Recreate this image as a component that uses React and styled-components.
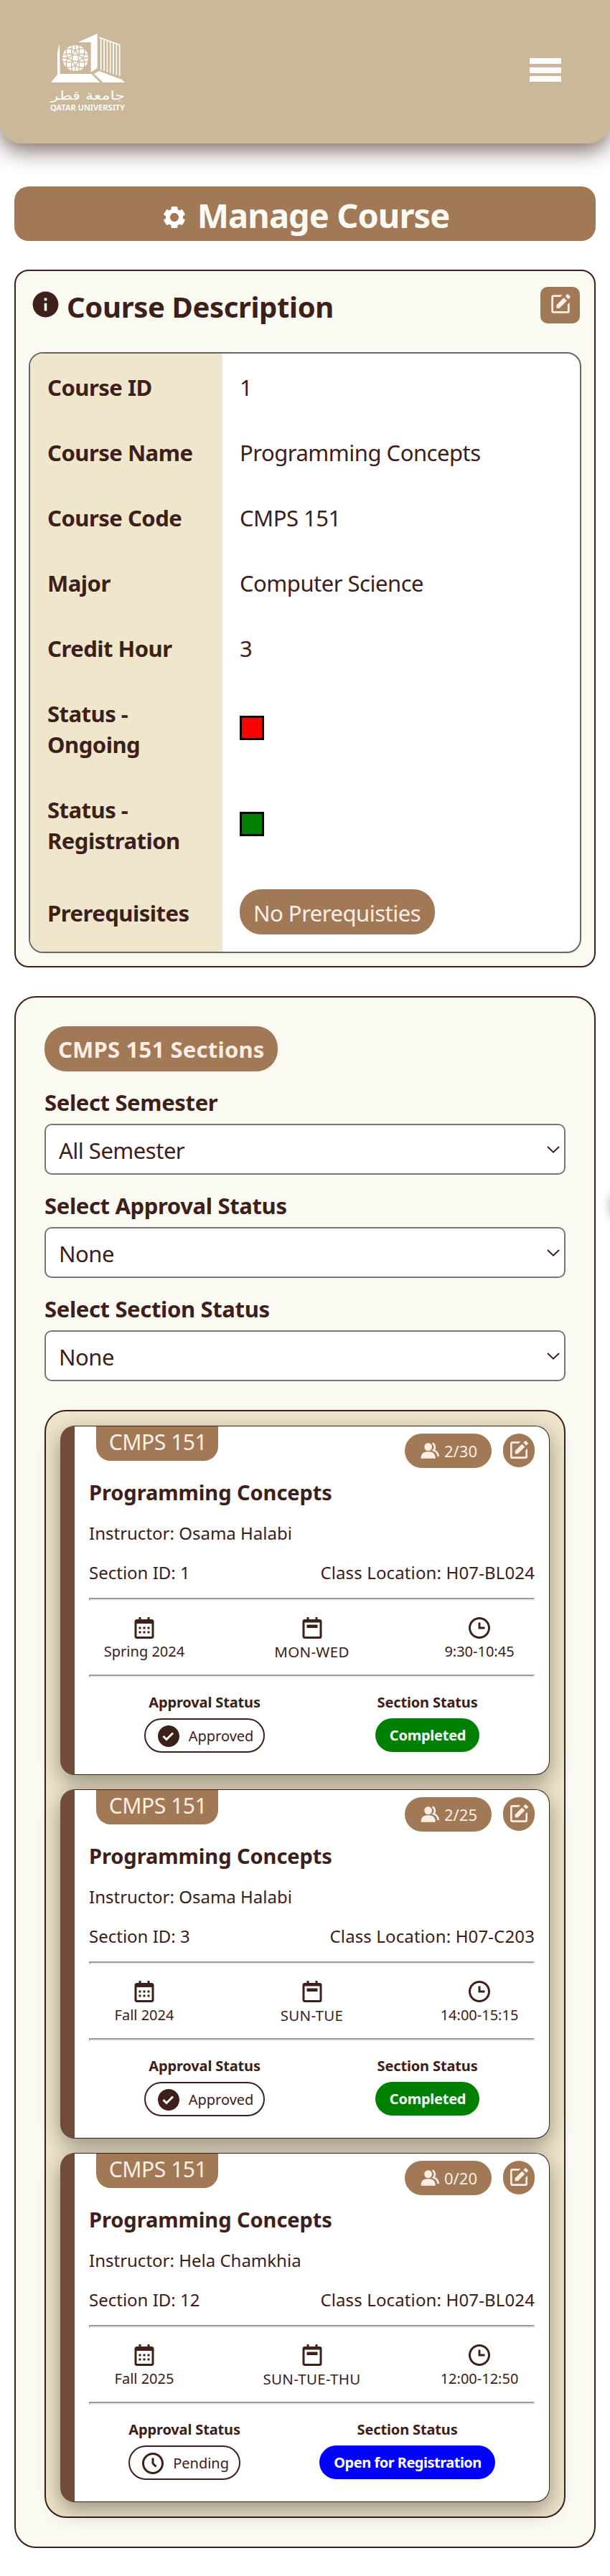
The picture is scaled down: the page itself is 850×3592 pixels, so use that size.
import React from "react";
import styled, { createGlobalStyle } from "styled-components";
import {
  BiSolidCog,
  BiSolidInfoCircle,
  BiCalendar,
  BiTime,
  BiTimeFive,
  BiSolidEdit,
  BiSolidGroup,
  BiSolidCheckCircle,
} from "react-icons/bi";

const ink = "#3c2019";
const brown = "#a17956";
const sand = "#cbb799";
const cream = "#fbfaf2";
const beige = "#efe6cb";
const linen = "#faeee4";

const GlobalStyle = createGlobalStyle`
  * { box-sizing: border-box; }
  body {
    margin: 0;
    background: #fff;
    color: ${ink};
    font-family: "Noto Sans", "Open Sans", sans-serif;
  }
  svg { flex: none; display: block; }
`;

const Page = styled.div`
  position: relative;
  overflow: hidden;
`;

const Header = styled.header`
  display: flex;
  justify-content: space-between;
  align-items: flex-start;
  height: 200px;
  padding: 30px 68px 0 40px;
  background: ${sand};
  border-radius: 0 0 30px 30px;
  box-shadow: 0 10px 30px rgba(60, 32, 25, 0.66);
`;

const MenuButton = styled.div`
  display: flex;
  flex-direction: column;
  gap: 4.5px;
  width: 44px;
  margin-top: 51px;
`;

const MenuBar = styled.span`
  height: 8px;
  background: #fff;
  border-radius: 1px;
`;

const Main = styled.main`
  display: flex;
  flex-direction: column;
  gap: 40px;
  padding: 60px 20px 39px;
`;

const TitleBar = styled.h1`
  display: flex;
  align-items: center;
  justify-content: center;
  gap: 14px;
  height: 76px;
  margin: 0;
  padding: 3px 0 0 1px;
  background: ${brown};
  border-radius: 20px;
  color: ${cream};
  font-size: 47px;
  line-height: 72px;
  letter-spacing: -0.95px;
  svg { color: #fff; margin-top: 7px; }
`;

const Panel = styled.section`
  border: 2px solid ${ink};
  border-radius: ${(p) => (p.$wide ? 30 : 20)}px;
  padding: ${(p) => (p.$wide ? "40px" : "22px 18px 18px")};
  background: ${cream};
`;

const PanelHead = styled.div`
  display: flex;
  align-items: flex-start;
  justify-content: space-between;
  height: 91px;
  padding: 0 2px 0 2px;
`;

const PanelTitle = styled.h2`
  display: flex;
  gap: 8px;
  margin: 0;
  font-size: 40px;
  line-height: 55px;
  letter-spacing: -0.35px;
  svg { margin-top: 3px; }
`;

const SquareEdit = styled.div`
  display: flex;
  align-items: center;
  justify-content: center;
  width: 55px;
  height: 51px;
  padding-bottom: 4px;
  border-radius: 10px;
  background: ${brown};
  color: ${linen};
`;

const Details = styled.div`
  overflow: hidden;
  border: 2px solid #666;
  border-radius: 20px;
  background: #fff;
`;

const DetailRow = styled.div`
  display: grid;
  grid-template-columns: 268px 1fr;
  font-size: 31px;
  line-height: 43px;
  letter-spacing: -0.5px;
`;

const DetailLabel = styled.div`
  display: flex;
  align-items: center;
  padding: 26px 24px 22px;
  background: #f0e6cc;
  font-weight: 700;
`;

const DetailValue = styled.div`
  display: flex;
  align-items: center;
  padding: ${(p) => (p.$text ? "26px 24px 22px" : "24px")};
`;

const Swatch = styled.span`
  width: 34px;
  height: 34px;
  border: 3px solid #000;
  background: ${(p) => p.$color};
`;

const Pill = styled.span`
  display: inline-flex;
  align-items: center;
  height: 63px;
  padding: 3px 20px 0 19px;
  border-radius: 30px;
  background: ${brown};
  color: ${linen};
  font-size: 31px;
  line-height: 43px;
`;

const SectionsPill = styled(Pill)`
  padding: 2px 18px 0 19px;
  font-weight: 700;
  letter-spacing: 0.2px;
`;

const Filters = styled.div`
  display: flex;
  flex-direction: column;
  gap: 21px;
  margin: 21px 0 40px;
`;

const Field = styled.div`
  display: flex;
  flex-direction: column;
  gap: 8px;
`;

const FieldLabel = styled.div`
  font-size: 31px;
  font-weight: 700;
  line-height: 44px;
  letter-spacing: -0.35px;
`;

const SelectBox = styled.div`
  display: flex;
  align-items: center;
  justify-content: space-between;
  height: 71px;
  padding: 0 6px 0 18px;
  border: 2px solid #767676;
  border-radius: 10px;
  background: #fff;
  font-size: 31px;
  line-height: 43px;
  letter-spacing: -0.5px;
  span { padding-top: 3px; }
`;

const CardList = styled.div`
  display: flex;
  flex-direction: column;
  gap: 20px;
  padding: 20px;
  border: 2px solid ${ink};
  border-radius: 30px;
  background: ${beige};
`;

const Card = styled.article`
  height: 487px;
  padding: 0 20px;
  border: 1px solid ${ink};
  border-left: 20px solid #704c39;
  border-radius: 20px;
  background: #fff;
  box-shadow: 0 10px 30px rgba(0, 0, 0, 0.38);
`;

const CardTop = styled.div`
  display: flex;
  align-items: flex-start;
  height: 72px;
  padding-left: 10px;
`;

const CodeTag = styled.div`
  width: 170px;
  height: 48px;
  margin-right: auto;
  padding-left: 2px;
  border-radius: 0 0 20px 20px;
  background: ${brown};
  color: ${linen};
  font-size: 30px;
  line-height: 43px;
  letter-spacing: -0.42px;
  text-align: center;
`;

const SeatCount = styled.div`
  display: flex;
  align-items: center;
  justify-content: center;
  gap: 3px;
  width: 121px;
  height: 48px;
  margin: 10px 16px 0 0;
  border-radius: 24px;
  background: ${brown};
  color: ${linen};
  font-size: 22px;
`;

const RoundEdit = styled.div`
  display: flex;
  align-items: center;
  justify-content: center;
  width: 44px;
  height: 47px;
  margin-top: 10px;
  padding-bottom: 2px;
  border-radius: 24px;
  background: ${brown};
  color: ${linen};
`;

const CardTitle = styled.h3`
  margin: 0 0 21px;
  font-size: 29px;
  line-height: 40px;
  letter-spacing: -0.05px;
`;

const InfoRow = styled.div`
  display: flex;
  justify-content: space-between;
  font-size: 24px;
  line-height: 32px;
  margin-bottom: ${(p) => p.$gap}px;
`;

const Location = styled.span`
  letter-spacing: 0.13px;
`;

const Divider = styled.hr`
  height: 4px;
  margin: 0;
  border: 2px solid;
  border-color: #9a9a9a #eee #eee #9a9a9a;
`;

const Schedule = styled.div`
  display: flex;
  justify-content: space-between;
  padding: 20px 0 19px;
`;

const ScheduleItem = styled.div`
  display: flex;
  flex-direction: column;
  align-items: center;
  gap: 2px;
  width: 154px;
  font-size: ${(p) => (p.$caps ? 20.5 : 20)}px;
  line-height: 26px;
  white-space: nowrap;
  letter-spacing: ${(p) => (p.$caps ? 0.3 : 0)}px;
`;

const Statuses = styled.div`
  display: flex;
  justify-content: space-around;
  padding-top: 21px;
`;

const StatusColumn = styled.div`
  display: flex;
  flex-direction: column;
  align-items: center;
  gap: 9px;
  font-size: 20px;
  line-height: 27px;
`;

const StatusLabel = styled.div`
  font-weight: 700;
  letter-spacing: -0.15px;
`;

const ApprovalBadge = styled.div`
  display: flex;
  align-items: center;
  gap: 10px;
  height: 48px;
  padding: 1px 14px 0 14px;
  border: 2px solid ${ink};
  border-radius: 24px;
`;

const StateBadge = styled.div`
  height: 47px;
  padding: 0 19px 0 20px;
  border-radius: 24px;
  background: ${(p) => p.$color};
  color: #fff;
  font-weight: 700;
  line-height: 48px;
  letter-spacing: ${(p) => (p.$tight ? -0.5 : -0.25)}px;
`;

const SideHandle = styled.div`
  position: absolute;
  top: 1656px;
  left: 851px;
  width: 52px;
  height: 52px;
  border-radius: 50%;
  box-shadow: 0 0 15px rgba(0, 0, 0, 0.35);
`;

const stripes = [302, 315, 328, 341, 354, 367, 380];
const tiles = [
  [157, 114],
  [211, 114],
  [157, 170],
  [211, 170],
];

function Logo() {
  return (
    <svg width="160" height="140" viewBox="0 0 480 420" fill="#fff">
      <path d="M120 222V130L129 92L131 222Z" />
      <path d="M93 255L122 219H262L298 255Z" />
      <path d="M273 219L294 207L390 243L402 255H311Z" />
      <path d="M206 87L287 50V195L260 212V87Z" />
      <path d="M294 67L382 98" stroke="#fff" strokeWidth="5" />
      {stripes.map((x) => (
        <path
          key={x}
          d={`M${x} ${70 + (x - 302) * 0.35}V${203 + (x - 302) * 0.33}`}
          stroke="#fff"
          strokeWidth="5"
        />
      ))}
      <circle cx="195" cy="153" r="54" />
      <g fill="none" stroke={sand} strokeWidth="4">
        <rect x="182" y="140" width="26" height="26" />
        {tiles.map(([x, y]) => (
          <rect key={`${x}-${y}`} x={x} y={y} width="22" height="22" />
        ))}
        {[0, 90, 180, 270].map((a) => (
          <g key={a} transform={`rotate(${a} 195 153)`}>
            <path d="M195 98V122M195 122L182 140M195 122L208 140M179 114L195 122L211 114M179 114L182 98M211 114L208 98M179 136L182 140" />
          </g>
        ))}
      </g>
      <text
        x="402"
        y="328"
        direction="rtl"
        fontFamily="DejaVu Sans, sans-serif"
        fontSize="50"
        textLength="310"
        lengthAdjust="spacingAndGlyphs"
      >
        جامعة قطر
      </text>
      <text
        x="90"
        y="372"
        fontFamily="Noto Sans, sans-serif"
        fontWeight="600"
        fontSize="31"
        textLength="312"
        lengthAdjust="spacingAndGlyphs"
      >
        QATAR UNIVERSITY
      </text>
    </svg>
  );
}

function DayIcon() {
  return (
    <svg width="36" height="36" viewBox="0 0 24 24" fill="currentColor">
      <path
        fillRule="evenodd"
        d="M19 4h-2V2h-2v2H9V2H7v2H5a2 2 0 0 0-2 2v14c0 1.1.9 2 2 2h14a2 2 0 0 0 2-2V6a2 2 0 0 0-2-2zM5 20V7h14v13z"
      />
      <path d="M7 9h10v3H7z" />
    </svg>
  );
}

function Chevron() {
  return (
    <svg width="18" height="10" viewBox="0 0 18 10" fill="none">
      <path d="M1 1L9 8.6L17 1" stroke={ink} strokeWidth="2" />
    </svg>
  );
}

const details = [
  ["Course ID", "1"],
  ["Course Name", "Programming Concepts"],
  ["Course Code", "CMPS 151"],
  ["Major", "Computer Science"],
  ["Credit Hour", "3"],
];

const filters = [
  ["Select Semester", "All Semester"],
  ["Select Approval Status", "None"],
  ["Select Section Status", "None"],
];

const sections = [
  { id: 1, seats: "2/30", instructor: "Osama Halabi", room: "H07-BL024", term: "Spring 2024", days: "MON-WED", time: "9:30-10:45", open: false },
  { id: 3, seats: "2/25", instructor: "Osama Halabi", room: "H07-C203", term: "Fall 2024", days: "SUN-TUE", time: "14:00-15:15", open: false },
  { id: 12, seats: "0/20", instructor: "Hela Chamkhia", room: "H07-BL024", term: "Fall 2025", days: "SUN-TUE-THU", time: "12:00-12:50", open: true },
];

function SectionCard({ section }) {
  return (
    <Card>
      <CardTop>
        <CodeTag>CMPS 151</CodeTag>
        <SeatCount>
          <BiSolidGroup size={32} />
          {section.seats}
        </SeatCount>
        <RoundEdit>
          <BiSolidEdit size={32} />
        </RoundEdit>
      </CardTop>
      <CardTitle>Programming Concepts</CardTitle>
      <InfoRow $gap={23}>
        <span>Instructor: {section.instructor}</span>
      </InfoRow>
      <InfoRow $gap={19}>
        <span>Section ID: {section.id}</span>
        <Location>Class Location: {section.room}</Location>
      </InfoRow>
      <Divider />
      <Schedule>
        <ScheduleItem>
          <BiCalendar size={36} />
          {section.term}
        </ScheduleItem>
        <ScheduleItem $caps>
          <DayIcon />
          {section.days}
        </ScheduleItem>
        <ScheduleItem>
          <BiTime size={36} />
          {section.time}
        </ScheduleItem>
      </Schedule>
      <Divider />
      <Statuses>
        <StatusColumn>
          <StatusLabel>Approval Status</StatusLabel>
          <ApprovalBadge>
            {section.open ? <BiTimeFive size={36} /> : <BiSolidCheckCircle size={36} />}
            {section.open ? "Pending" : "Approved"}
          </ApprovalBadge>
        </StatusColumn>
        <StatusColumn>
          <StatusLabel>Section Status</StatusLabel>
          <StateBadge $color={section.open ? "#0000ff" : "#008000"} $tight={section.open}>
            {section.open ? "Open for Registration" : "Completed"}
          </StateBadge>
        </StatusColumn>
      </Statuses>
    </Card>
  );
}

export default function App() {
  return (
    <Page>
      <GlobalStyle />
      <Header>
        <Logo />
        <MenuButton>
          <MenuBar />
          <MenuBar />
          <MenuBar />
        </MenuButton>
      </Header>
      <Main>
        <TitleBar>
          <BiSolidCog size={36} />
          Manage Course
        </TitleBar>
        <Panel>
          <PanelHead>
            <PanelTitle>
              <BiSolidInfoCircle size={43} />
              Course Description
            </PanelTitle>
            <SquareEdit>
              <BiSolidEdit size={34} />
            </SquareEdit>
          </PanelHead>
          <Details>
            {details.map(([label, value]) => (
              <DetailRow key={label}>
                <DetailLabel>{label}</DetailLabel>
                <DetailValue $text>{value}</DetailValue>
              </DetailRow>
            ))}
            <DetailRow>
              <DetailLabel>Status - Ongoing</DetailLabel>
              <DetailValue>
                <Swatch $color="#ff0000" />
              </DetailValue>
            </DetailRow>
            <DetailRow>
              <DetailLabel>Status - Registration</DetailLabel>
              <DetailValue>
                <Swatch $color="#008000" />
              </DetailValue>
            </DetailRow>
            <DetailRow>
              <DetailLabel>Prerequisites</DetailLabel>
              <DetailValue>
                <Pill>No Prerequisties</Pill>
              </DetailValue>
            </DetailRow>
          </Details>
        </Panel>
        <Panel $wide>
          <Field>
            <div>
              <SectionsPill>CMPS 151 Sections</SectionsPill>
            </div>
          </Field>
          <Filters>
            {filters.map(([label, value]) => (
              <Field key={label}>
                <FieldLabel>{label}</FieldLabel>
                <SelectBox>
                  <span>{value}</span>
                  <Chevron />
                </SelectBox>
              </Field>
            ))}
          </Filters>
          <CardList>
            {sections.map((section) => (
              <SectionCard key={section.id} section={section} />
            ))}
          </CardList>
        </Panel>
      </Main>
      <SideHandle />
    </Page>
  );
}
